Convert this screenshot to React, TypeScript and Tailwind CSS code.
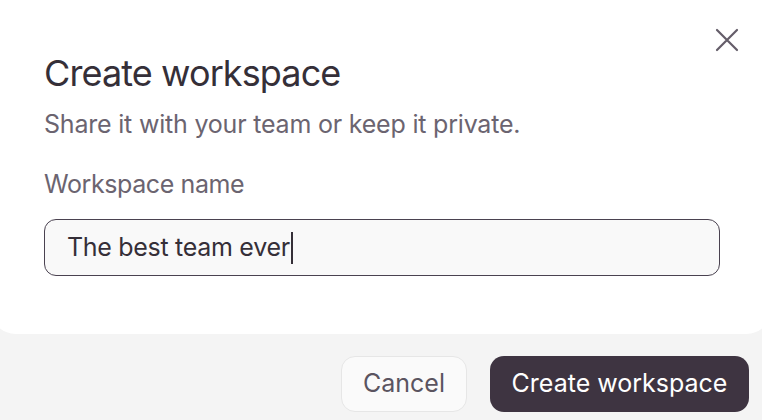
export default function App() {
  return (
    <div className="flex h-[420px] w-[762px] flex-col overflow-hidden bg-[#f4f4f4] font-['Inter',sans-serif]">
      <div className="relative -mx-[10px] h-[334px] shrink-0 rounded-b-[26px] bg-white pl-[54px] pr-[52px] pt-[51px]">
        <button
          type="button"
          aria-label="Close"
          className="absolute right-[33px] top-[28px] text-[#645d69]"
        >
          <svg width="24" height="24" viewBox="0 0 24 24" fill="none">
            <path
              d="M2 2L22 22M22 2L2 22"
              stroke="currentColor"
              strokeWidth="2.2"
              strokeLinecap="round"
            />
          </svg>
        </button>
        <h1 className="text-[36px] leading-[44px] font-normal tracking-[-0.9px] text-[#352f38]">
          Create workspace
        </h1>
        <p className="mt-[13px] text-[25px] leading-[32px] tracking-[-0.2px] text-[#6b6470]">
          Share it with your team or keep it private.
        </p>
        <label
          htmlFor="ws-name"
          className="mt-[28px] block text-[25px] leading-[32px] tracking-[-0.4px] text-[#6b6470]"
        >
          Workspace name
        </label>
        <div className="mt-[19px] flex h-[57px] items-center rounded-[12px] border border-[#4a4250] bg-[#f9f9f9] px-[22px]">
          <span className="text-[25px] tracking-[-0.3px] text-[#352f38]">
            The best team ever
          </span>
          <span className="ml-[1px] h-[32px] w-[2px] bg-[#352f38]" />
        </div>
      </div>
      <div className="flex flex-1 items-start justify-end gap-[23px] pr-[13px] pt-[22px]">
        <button
          type="button"
          className="h-[56px] w-[126px] rounded-[14px] border border-[#e6e6e6] bg-[#fafafa] text-[25px] text-[#5a5460]"
        >
          Cancel
        </button>
        <button
          type="button"
          className="h-[56px] w-[259px] rounded-[14px] bg-[#3e3441] text-[25px] text-white"
        >
          Create workspace
        </button>
      </div>
    </div>
  );
}
